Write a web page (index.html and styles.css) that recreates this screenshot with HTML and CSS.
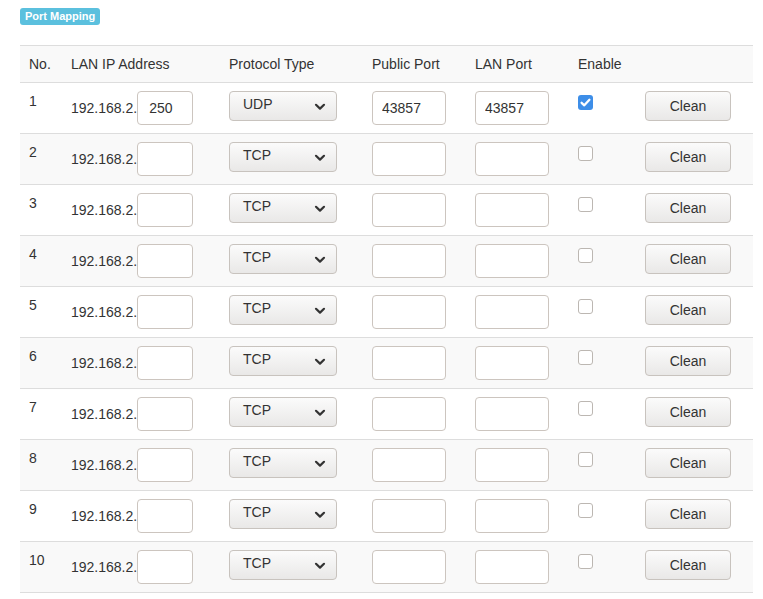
FILE: index.html
```html
<!DOCTYPE html>
<html>
<head>
<meta charset="utf-8">
<link rel="stylesheet" href="styles.css">
</head>
<body>
<div class="badge">Port Mapping</div>
<table class="pm">
<colgroup>
<col class="c1"><col class="c2"><col class="c3"><col class="c4"><col class="c5"><col class="c6"><col class="c7">
</colgroup>
<thead>
<tr><th>No.</th><th>LAN IP Address</th><th>Protocol Type</th><th>Public Port</th><th>LAN Port</th><th>Enable</th><th></th></tr>
</thead>
<tbody>
<tr>
<td>1</td>
<td><span class="ip">192.168.2.</span><input class="in ipin" type="text" value="250"></td>
<td><span class="sel"><span class="selv">UDP</span><svg class="chev" width="12" height="8" viewBox="0 0 12 8"><path d="M2 1.8 L6 5.6 L10 1.8" fill="none" stroke="#333" stroke-width="2.2" stroke-linecap="round" stroke-linejoin="round"/></svg></span></td>
<td><input class="in port" type="text" value="43857"></td>
<td><input class="in port" type="text" value="43857"></td>
<td><span class="cb on"><svg width="15" height="15" viewBox="0 0 15 15"><path d="M3.6 7.8 L6.3 10.3 L11.4 4.8" fill="none" stroke="#fff" stroke-width="2.3" stroke-linecap="round" stroke-linejoin="round"/></svg></span></td>
<td><button class="btn">Clean</button></td>
</tr>
<tr>
<td>2</td>
<td><span class="ip">192.168.2.</span><input class="in ipin" type="text"></td>
<td><span class="sel"><span class="selv">TCP</span><svg class="chev" width="12" height="8" viewBox="0 0 12 8"><path d="M2 1.8 L6 5.6 L10 1.8" fill="none" stroke="#333" stroke-width="2.2" stroke-linecap="round" stroke-linejoin="round"/></svg></span></td>
<td><input class="in port" type="text"></td>
<td><input class="in port" type="text"></td>
<td><span class="cb"></span></td>
<td><button class="btn">Clean</button></td>
</tr>
<tr>
<td>3</td>
<td><span class="ip">192.168.2.</span><input class="in ipin" type="text"></td>
<td><span class="sel"><span class="selv">TCP</span><svg class="chev" width="12" height="8" viewBox="0 0 12 8"><path d="M2 1.8 L6 5.6 L10 1.8" fill="none" stroke="#333" stroke-width="2.2" stroke-linecap="round" stroke-linejoin="round"/></svg></span></td>
<td><input class="in port" type="text"></td>
<td><input class="in port" type="text"></td>
<td><span class="cb"></span></td>
<td><button class="btn">Clean</button></td>
</tr>
<tr>
<td>4</td>
<td><span class="ip">192.168.2.</span><input class="in ipin" type="text"></td>
<td><span class="sel"><span class="selv">TCP</span><svg class="chev" width="12" height="8" viewBox="0 0 12 8"><path d="M2 1.8 L6 5.6 L10 1.8" fill="none" stroke="#333" stroke-width="2.2" stroke-linecap="round" stroke-linejoin="round"/></svg></span></td>
<td><input class="in port" type="text"></td>
<td><input class="in port" type="text"></td>
<td><span class="cb"></span></td>
<td><button class="btn">Clean</button></td>
</tr>
<tr>
<td>5</td>
<td><span class="ip">192.168.2.</span><input class="in ipin" type="text"></td>
<td><span class="sel"><span class="selv">TCP</span><svg class="chev" width="12" height="8" viewBox="0 0 12 8"><path d="M2 1.8 L6 5.6 L10 1.8" fill="none" stroke="#333" stroke-width="2.2" stroke-linecap="round" stroke-linejoin="round"/></svg></span></td>
<td><input class="in port" type="text"></td>
<td><input class="in port" type="text"></td>
<td><span class="cb"></span></td>
<td><button class="btn">Clean</button></td>
</tr>
<tr>
<td>6</td>
<td><span class="ip">192.168.2.</span><input class="in ipin" type="text"></td>
<td><span class="sel"><span class="selv">TCP</span><svg class="chev" width="12" height="8" viewBox="0 0 12 8"><path d="M2 1.8 L6 5.6 L10 1.8" fill="none" stroke="#333" stroke-width="2.2" stroke-linecap="round" stroke-linejoin="round"/></svg></span></td>
<td><input class="in port" type="text"></td>
<td><input class="in port" type="text"></td>
<td><span class="cb"></span></td>
<td><button class="btn">Clean</button></td>
</tr>
<tr>
<td>7</td>
<td><span class="ip">192.168.2.</span><input class="in ipin" type="text"></td>
<td><span class="sel"><span class="selv">TCP</span><svg class="chev" width="12" height="8" viewBox="0 0 12 8"><path d="M2 1.8 L6 5.6 L10 1.8" fill="none" stroke="#333" stroke-width="2.2" stroke-linecap="round" stroke-linejoin="round"/></svg></span></td>
<td><input class="in port" type="text"></td>
<td><input class="in port" type="text"></td>
<td><span class="cb"></span></td>
<td><button class="btn">Clean</button></td>
</tr>
<tr>
<td>8</td>
<td><span class="ip">192.168.2.</span><input class="in ipin" type="text"></td>
<td><span class="sel"><span class="selv">TCP</span><svg class="chev" width="12" height="8" viewBox="0 0 12 8"><path d="M2 1.8 L6 5.6 L10 1.8" fill="none" stroke="#333" stroke-width="2.2" stroke-linecap="round" stroke-linejoin="round"/></svg></span></td>
<td><input class="in port" type="text"></td>
<td><input class="in port" type="text"></td>
<td><span class="cb"></span></td>
<td><button class="btn">Clean</button></td>
</tr>
<tr>
<td>9</td>
<td><span class="ip">192.168.2.</span><input class="in ipin" type="text"></td>
<td><span class="sel"><span class="selv">TCP</span><svg class="chev" width="12" height="8" viewBox="0 0 12 8"><path d="M2 1.8 L6 5.6 L10 1.8" fill="none" stroke="#333" stroke-width="2.2" stroke-linecap="round" stroke-linejoin="round"/></svg></span></td>
<td><input class="in port" type="text"></td>
<td><input class="in port" type="text"></td>
<td><span class="cb"></span></td>
<td><button class="btn">Clean</button></td>
</tr>
<tr>
<td>10</td>
<td><span class="ip">192.168.2.</span><input class="in ipin" type="text"></td>
<td><span class="sel"><span class="selv">TCP</span><svg class="chev" width="12" height="8" viewBox="0 0 12 8"><path d="M2 1.8 L6 5.6 L10 1.8" fill="none" stroke="#333" stroke-width="2.2" stroke-linecap="round" stroke-linejoin="round"/></svg></span></td>
<td><input class="in port" type="text"></td>
<td><input class="in port" type="text"></td>
<td><span class="cb"></span></td>
<td><button class="btn">Clean</button></td>
</tr>
</tbody>
</table>
</body>
</html>
```
FILE: styles.css
```css
html, body {
  margin: 0;
  background: #fff;
}
body {
  padding: 8px 10px 0 20px;
  font-family: "Liberation Sans", Arial, sans-serif;
  font-size: 14px;
  color: #333;
}
.badge {
  width: fit-content;
  background: #5bc0de;
  color: #fff;
  font-weight: bold;
  font-size: 11px;
  line-height: 13px;
  padding: 2px 5px 2px 5px;
  border-radius: 3px;
}
.pm {
  margin-top: 20px;
  width: 733px;
  border-collapse: collapse;
  table-layout: fixed;
}
.c1 { width: 42px; }
.c2 { width: 158px; }
.c3 { width: 143px; }
.c4 { width: 103px; }
.c5 { width: 103px; }
.c6 { width: 67px; }
.c7 { width: 117px; }
.pm th {
  text-align: left;
  font-weight: normal;
  padding: 8px 8px 8px 9px;
  line-height: 20px;
  background: #f9f9f9;
  border-top: 1px solid #ddd;
  border-bottom: 1px solid #ddd;
}
.pm td {
  padding: 8px 8px 8px 9px;
  line-height: 20px;
  vertical-align: top;
  border-bottom: 1px solid #ddd;
  white-space: nowrap;
}
.pm tbody tr:nth-child(even) td {
  background: #f9f9f9;
}
.ip {
  font-size: 14px;
}
.in {
  box-sizing: border-box;
  height: 34px;
  border: 1px solid #ccc5bf;
  border-radius: 4px;
  background: #fff;
  font-family: "Liberation Sans", Arial, sans-serif;
  font-size: 14px;
  color: #333;
  padding: 0 10px;
  margin: 0;
  vertical-align: baseline;
  outline: none;
}
.ipin {
  width: 56px;
  padding-left: 11px;
}
.port {
  width: 74px;
  padding-left: 9px;
}
.sel {
  box-sizing: border-box;
  position: relative;
  display: block;
  width: 108px;
  height: 30px;
  border: 1px solid #c8c3be;
  border-radius: 4px;
  background: linear-gradient(#fbfbfb, #e9e8e7);
}
.selv {
  display: block;
  padding-left: 13px;
  line-height: 24px;
}
.chev {
  position: absolute;
  right: 10px;
  top: 11px;
}
.cb {
  box-sizing: border-box;
  display: block;
  width: 15px;
  height: 15px;
  margin-top: 4px;
  border: 1px solid #bcb7b2;
  border-radius: 3px;
  background: #fff;
}
.cb.on {
  border: none;
  background: #3d8ee8;
}
.cb svg {
  display: block;
}
.btn {
  box-sizing: border-box;
  width: 86px;
  height: 30px;
  display: block;
  border: 1px solid #c8c3be;
  border-radius: 4px;
  background: linear-gradient(#fbfbfb, #e9e8e7);
  font-family: "Liberation Sans", Arial, sans-serif;
  font-size: 14px;
  color: #333;
  padding: 0;
  margin: 0;
}
```
